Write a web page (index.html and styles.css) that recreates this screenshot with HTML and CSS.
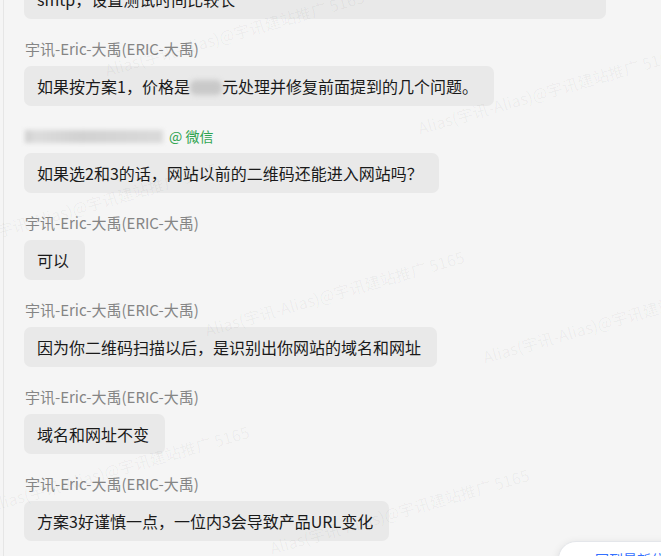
FILE: index.html
```html
<!DOCTYPE html>
<html lang="zh-CN">
<head>
    <meta charset="UTF-8">
    <meta name="viewport" content="width=device-width, initial-scale=1.0">
    <title>聊天记录</title>
    <link rel="stylesheet" href="styles.css">
</head>
<body>
    <div class="chat">
        <!-- message list -->
        <div class="msg msg-cut">
            <div class="bubble bubble-wide">smtp，设置测试时间比较长</div>
        </div>
        <div class="msg">
            <div class="name">宇讯-Eric-大禹(ERIC-大禹)</div>
            <div class="bubble">如果按方案1，价格是<span class="blur-num"></span>元处理并修复前面提到的几个问题。</div>
        </div>
        <div class="msg">
            <div class="name"><span class="blur-name"></span><span class="tag">@ 微信</span></div>
            <div class="bubble">如果选2和3的话，网站以前的二维码还能进入网站吗？</div>
        </div>
        <div class="msg">
            <div class="name">宇讯-Eric-大禹(ERIC-大禹)</div>
            <div class="bubble">可以</div>
        </div>
        <div class="msg">
            <div class="name">宇讯-Eric-大禹(ERIC-大禹)</div>
            <div class="bubble">因为你二维码扫描以后，是识别出你网站的域名和网址</div>
        </div>
        <div class="msg">
            <div class="name">宇讯-Eric-大禹(ERIC-大禹)</div>
            <div class="bubble">域名和网址不变</div>
        </div>
        <div class="msg">
            <div class="name">宇讯-Eric-大禹(ERIC-大禹)</div>
            <div class="bubble">方案3好谨慎一点，一位内3会导致产品URL变化</div>
        </div>
    </div>

    <!-- watermark layer -->
    <div class="watermarks">
        <span class="wm wm-g">Alias(宇讯-Alias)@宇讯建站推广 5165</span>
        <span class="wm wm-b">Alias(宇讯-Alias)@宇讯建站推广 5165</span>
        <span class="wm wm-f">Alias(宇讯-Alias)@宇讯建站推广 5165</span>
        <span class="wm wm-a">Alias(宇讯-Alias)@宇讯建站推广 5165</span>
        <span class="wm wm-c">Alias(宇讯-Alias)@宇讯建站推广 5165</span>
        <span class="wm wm-e">Alias(宇讯-Alias)@宇讯建站推广 5165</span>
        <span class="wm wm-d">Alias(宇讯-Alias)@宇讯建站推广 5165</span>
    </div>

    <button class="to-latest">
        <svg width="12" height="12" viewBox="0 0 12 12"><path d="M2 4l4 4 4-4" fill="none" stroke="#3370ff" stroke-width="1.4" stroke-linecap="round" stroke-linejoin="round"/></svg>
        回到最新位置
    </button>
</body>
</html>
```

FILE: styles.css
```css
body {
    margin: 0;
    height: 556px;
    overflow: hidden;
    background: #f5f5f5;
    font-family: "Noto Sans CJK SC", "Noto Sans", sans-serif;
    position: relative;
}

.chat {
    margin-left: 3px;
    padding-left: 20px;
    border-left: 1px solid #e6e6e6;
    display: flex;
    flex-direction: column;
    align-items: flex-start;
}

.msg {
    display: flex;
    flex-direction: column;
    align-items: flex-start;
    margin-bottom: 20px;
}

.msg-cut {
    margin-top: -21px;
}

.name {
    display: flex;
    align-items: center;
    height: 20px;
    line-height: 20px;
    font-size: 15px;
    color: #858585;
    margin-bottom: 7px;
    margin-left: 1px;
}

.bubble {
    background: #e9e9e9;
    border-radius: 7px;
    padding: 8px 16px 8px 13px;
    font-size: 16px;
    line-height: 24px;
    color: #1a1a1a;
    white-space: nowrap;
}

.bubble-wide {
    width: 553px;
}

.blur-num {
    display: inline-block;
    width: 32px;
    height: 15px;
    vertical-align: -2px;
    background: #c9c9c9;
    border-radius: 6px;
    filter: blur(2.5px);
}

.blur-name {
    display: inline-block;
    width: 138px;
    height: 13px;
    background: linear-gradient(90deg, #cfcfcf, #dcdcdc 8%, #d2d2d2 40%, #dadada);
    filter: blur(2px);
    margin-right: 6px;
}

.tag {
    color: #2ea44f;
    font-size: 14px;
}

.watermarks {
    position: absolute;
    left: 0;
    top: 0;
    width: 661px;
    height: 556px;
    overflow: hidden;
    pointer-events: none;
}

.wm {
    position: absolute;
    white-space: nowrap;
    font-size: 16px;
    line-height: 16px;
    color: rgba(0, 0, 0, 0.045);
    transform-origin: left center;
    transform: rotate(-16deg);
}

.wm-g { left: 105px; top: 62px; }
.wm-b { left: 418px; top: 120px; }
.wm-f { left: -42px; top: 234px; }
.wm-a { left: 205px; top: 322px; }
.wm-c { left: 483px; top: 349px; }
.wm-e { left: -10px; top: 497px; }
.wm-d { left: 270px; top: 540px; }

.to-latest {
    position: absolute;
    left: 558px;
    top: 541px;
    width: 150px;
    height: 36px;
    display: flex;
    align-items: center;
    gap: 8px;
    padding: 0 0 0 16px;
    background: #fff;
    border: 1px solid #e4e6ea;
    border-radius: 18px;
    box-shadow: 0 2px 8px rgba(0, 0, 0, 0.1);
    font-family: "Noto Sans CJK SC", sans-serif;
    font-size: 14px;
    color: #3370ff;
}
```
